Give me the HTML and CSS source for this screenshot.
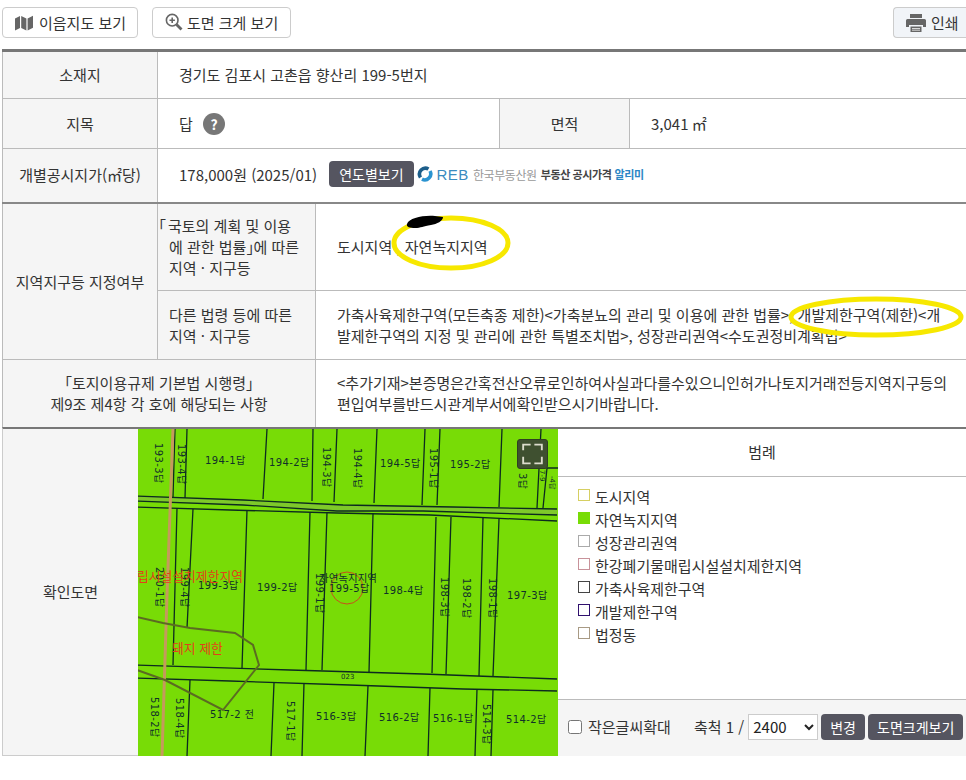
FILE: index.html
```html
<!DOCTYPE html>
<html lang="ko">
<head>
  <meta charset="UTF-8" />
  <meta name="viewport" content="width=device-width, initial-scale=1.0"/>
  <title>토지이용계획 확인</title>
  <link rel="stylesheet" href="styles.css">
</head>
<body>
<div class="page">

  <!-- 상단 버튼 -->
  <div class="toolbar">
    <div class="toolbar-left">
      <button class="tool-btn map-btn" type="button">
        <svg class="ico-map" viewBox="0 0 18 16"><path d="M0 3.500 5 1v12l-5 2.500zM6.200 1l5.200 2.400v12L6.200 13zM12.600 3.400 18 .8v12l-5.400 2.600z"/></svg>
        이음지도 보기
      </button>
      <button class="tool-btn zoom-btn" type="button">
        <svg class="ico-zoom" viewBox="0 0 18 18"><circle cx="7.200" cy="7.200" r="5.800"/><path d="M11.500 11.500 16.500 16.500" class="handle"/><path d="M7.200 4.500v5.400M4.500 7.200h5.400"/></svg>
        도면 크게 보기
      </button>
    </div>
    <button class="tool-btn print-btn" type="button">
      <svg class="ico-print" viewBox="0 0 20 18"><path d="M4 0h12v4H4zM1.500 5h17A1.500 1.500 0 0 1 20 6.500V13h-3v-2H3v2H0V6.500A1.500 1.500 0 0 1 1.500 5zM4.500 12.500h11V18h-11z"/><path class="paper" d="M6 14h8v.8H6zM6 15.800h8v.8H6z"/></svg>
      인쇄
    </button>
  </div>

  <!-- 기본 정보 -->
  <table class="info">
    <colgroup>
      <col class="c1"><col class="c2"><col class="c3"><col class="c4"><col class="c5">
    </colgroup>
    <tr class="r1">
      <th>소재지</th>
      <td colspan="4">경기도 김포시 고촌읍 향산리 199-5번지</td>
    </tr>
    <tr class="r2">
      <th>지목</th>
      <td colspan="2">답 <span class="help">?</span></td>
      <th>면적</th>
      <td>3,041 ㎡</td>
    </tr>
    <tr class="r3">
      <th>개별공시지가(㎡당)</th>
      <td colspan="4">
        <div class="price">
          <span>178,000원 (2025/01)</span>
          <button class="dark-btn year-btn" type="button">연도별보기</button>
          <span class="reb">
            <svg class="reb-mark" viewBox="0 0 16 16"><path class="arc-dark" d="M3.500 11.500A6 6 0 0 1 11.500 3"/><path class="arc-blue" d="M13 5A6 6 0 0 1 5 13.200"/></svg>
            <span class="reb-name">REB</span>
            <span class="reb-gray">한국부동산원</span>
            <b>부동산 공시가격</b>
            <b class="reb-blue">알리미</b>
          </span>
        </div>
      </td>
    </tr>
    <tr class="r4">
      <th rowspan="2">지역지구등 지정여부</th>
      <th class="sub"><span class="hang">「</span>국토의 계획 및 이용<br>에 관한 법률<span class="close">」</span>에 따른<br>지역 · 지구등</th>
      <td colspan="3" class="zone">도시지역 , 자연녹지지역</td>
    </tr>
    <tr class="r5">
      <th class="sub">다른 법령 등에 따른<br>지역 · 지구등</th>
      <td colspan="3" class="long">가축사육제한구역(모든축종 제한)&lt;가축분뇨의 관리 및 이용에 관한 법률&gt;, 개발제한구역(제한)&lt;개발제한구역의 지정 및 관리에 관한 특별조치법&gt;, 성장관리권역&lt;수도권정비계획법&gt;</td>
    </tr>
    <tr class="r6">
      <th colspan="2">「토지이용규제 기본법 시행령」<br>제9조 제4항 각 호에 해당되는 사항</th>
      <td colspan="3" class="long">&lt;추가기재&gt;본증명은간혹전산오류로인하여사실과다를수있으니인허가나토지거래전등지역지구등의편입여부를반드시관계부서에확인받으시기바랍니다.</td>
    </tr>
  </table>

  <!-- 확인도면 -->
  <div class="map-row">
    <div class="map-label">확인도면</div>
    <div class="map-box">
      <svg class="map" viewBox="138 429 420 327">
        <rect x="138" y="429" width="420" height="327" fill="#78dc06"/>
        <polygon class="road" points="137,496 243,500 343,505 453,507 557,509 557,515 423,511 337,512 243,505 137,501"/>

        <g class="parcel">
          <!-- 도로 -->
          <polyline points="137,496 243,500 343,505 453,507 557,509"/>
          <polyline points="137,501 243,505 337,511 423,511 557,515"/>
          <polyline points="137,507 230,510 337,513 430,515 557,521"/>
          <polyline points="137,665 290,670 423,674 557,679"/>
          <polyline points="137,678 230,681 350,685 463,689 557,691"/>
          <!-- 상단 필지 -->
          <path d="M175 429 173 497M187 429 185 498M267 429 263 499M313 429 312 501M337 429 334 502M377 429 374 503M425 429 422 505M440 429 437 505M502 429 499 507M541 429 537 508M547 468 543 508M547 468H558"/>
          <!-- 중간 필지 -->
          <path d="M177 508 173 665M193 509 187 628M247 510 242 668M310 512 306 670M327 512 322 670M373 514 369 672M436 517 432 673M451 517 446 674M483 518 479 676M499 519 493 676"/>
          <!-- 하단 필지 -->
          <path d="M190 680 187 756M274 683 271 756M304 683 302 756M368 686 365 756M430 688 428 756M477 689 475 756M493 690 491 756"/>
        </g>

        <polyline class="pink-line" points="173,429 167,595 162,756"/>
        <polyline class="olive-line" points="137,617 163,623 190,628 235,633 253,645 259,665 223,710 165,680 137,670"/>
        <circle class="red-circle" cx="347" cy="588" r="16"/>

        <g class="lbl">
          <text x="205" y="464">194-1답</text>
          <text x="269" y="466">194-2답</text>
          <text x="380" y="467">194-5답</text>
          <text x="450" y="468">195-2답</text>
          <text x="198" y="589">199-3답</text>
          <text x="257" y="591">199-2답</text>
          <text x="329" y="592">199-5답</text>
          <text x="383" y="594">198-4답</text>
          <text x="507" y="599">197-3답</text>
          <text x="210" y="718">517-2 전</text>
          <text x="316" y="720">516-3답</text>
          <text x="379" y="721">516-2답</text>
          <text x="433" y="722">516-1답</text>
          <text x="506" y="723">514-2답</text>

          <text transform="translate(155 443) rotate(90)">193-3답</text>
          <text transform="translate(178 444) rotate(90)">193-4답</text>
          <text transform="translate(323 447) rotate(90)">194-3답</text>
          <text transform="translate(354 448) rotate(90)">194-4답</text>
          <text transform="translate(430 448) rotate(90)">195-1답</text>
          <text transform="translate(519 473) rotate(90)">3답</text>
          <text transform="translate(156 567) rotate(90)">200-1답</text>
          <text transform="translate(181 567) rotate(90)">199-4답</text>
          <text transform="translate(316 573) rotate(90)">199-1답</text>
          <text transform="translate(441 577) rotate(90)">198-3답</text>
          <text transform="translate(463 578) rotate(90)">198-2답</text>
          <text transform="translate(489 578) rotate(90)">198-1답</text>
          <text transform="translate(151 697) rotate(90)">518-2답</text>
          <text transform="translate(176 698) rotate(90)">518-4답</text>
          <text transform="translate(287 701) rotate(90)">517-1답</text>
          <text transform="translate(483 704) rotate(90)">514-3답</text>
        </g>
        <text class="tiny" transform="translate(540 470) rotate(90)">7-9</text>
        <text class="tiny" transform="translate(550 476) rotate(90)">-4답</text>
        <text class="tiny" x="341" y="679">023</text>

        <text class="zone-mark" x="319" y="582">자연녹지지역</text>
        <text class="red-lbl" x="137" y="581">립시설설치제한지역</text>
        <text class="red-lbl" x="172" y="653">돼지 제한</text>
      </svg>
      <button class="full-btn" type="button">
        <svg viewBox="0 0 30 30"><path d="M5 11V5h8M17 5h8v6M25 18v7h-8M13 25H5v-7"/></svg>
      </button>
    </div>
    <div class="legend">
      <div class="legend-title">범례</div>
      <ul class="legend-list">
        <li><i class="sw sw-city"></i>도시지역</li>
        <li><i class="sw sw-green"></i>자연녹지지역</li>
        <li><i class="sw sw-growth"></i>성장관리권역</li>
        <li><i class="sw sw-han"></i>한강폐기물매립시설설치제한지역</li>
        <li><i class="sw sw-farm"></i>가축사육제한구역</li>
        <li><i class="sw sw-dev"></i>개발제한구역</li>
        <li><i class="sw sw-dong"></i>법정동</li>
      </ul>
      <div class="legend-foot">
        <label class="small-text"><input type="checkbox"> 작은글씨확대</label>
        <span class="scale">축척 1 /</span>
        <select class="scale-select">
          <option>2400</option>
        </select>
        <button class="dark-btn" type="button">변경</button>
        <button class="dark-btn" type="button">도면크게보기</button>
      </div>
    </div>
  </div>

  <!-- 손으로 그린 표시 -->
  <svg class="marks" viewBox="0 0 966 780">
    <ellipse class="mark-yellow" cx="451" cy="243" rx="57" ry="25"/>
    <ellipse class="mark-yellow" cx="876" cy="317" rx="85" ry="18"/>
    <path class="mark-black" d="M407 224c2-6 16-9 28-8l8 1c0 4-6 7-12 8-8 1-10 3-16 3-5 0-9-1-8-4z"/>
  </svg>

</div>
</body>
</html>
```

FILE: styles.css
```css
* {
  box-sizing: border-box;
}

html, body {
  margin: 0;
  padding: 0;
  background: #fff;
}

body {
  font-family: "Noto Sans CJK KR", "Noto Sans", sans-serif;
  font-size: 15px;
  color: #333;
  overflow: hidden;
}

.page {
  position: relative;
  width: 966px;
  height: 780px;
  padding: 7px 0 0 2px;
  overflow: hidden;
}

button, select, input {
  font-family: inherit;
}

/* === TOOLBAR === */
.toolbar {
  display: flex;
  justify-content: space-between;
  height: 31px;
  margin-bottom: 11px;
}

.toolbar-left {
  display: flex;
  gap: 14px;
}

.tool-btn {
  display: flex;
  align-items: center;
  height: 31px;
  padding: 0 12px;
  background: #fff;
  border: 1px solid #ccc;
  border-radius: 4px;
  font-size: 15px;
  white-space: nowrap;
  color: #333;
}

.map-btn {
  width: 136px;
  gap: 6px;
}

.zoom-btn {
  width: 139px;
  gap: 4px;
}

.print-btn {
  width: 73px;
  gap: 5px;
  padding: 0 0 0 12px;
  background: #f1f4f8;
  border-radius: 4px 0 0 4px;
  border-right: 0;
}

.ico-map {
  flex: none;
  width: 18px;
  height: 16px;
  fill: #666;
}

.ico-zoom {
  flex: none;
  width: 18px;
  height: 18px;
  margin-top: -2px;
  fill: none;
  stroke: #666;
  stroke-width: 1.600;
}

.ico-zoom .handle {
  stroke-width: 2.800;
}

.ico-print {
  flex: none;
  width: 20px;
  height: 18px;
  fill: #666;
}

.ico-print .paper {
  fill: #fff;
}

/* === TABLE === */
.info {
  width: 964px;
  table-layout: fixed;
  border-collapse: collapse;
  border-top: 3px solid #777;
  border-left: 1px solid #ccc;
}

.c1 { width: 155px; }
.c2 { width: 158px; }
.c3 { width: 184px; }
.c4 { width: 130px; }
.c5 { width: 337px; }

.info th, .info td {
  padding: 0;
  border: 1px solid #bbb;
  font-size: 15px;
  line-height: 21px;
}

.info tr > :last-child {
  border-right: 0;
}

.info th {
  background: #f5f5f5;
  font-weight: 400;
  text-align: center;
}

.info td {
  padding-left: 21px;
}

.info .sub {
  padding: 0 0 0 11px;
  text-align: left;
}

.hang {
  display: inline-block;
  width: 17px;
  margin-left: -18px;
}

.close {
  letter-spacing: -8px;
}

.r1 { height: 48px; }
.r2 { height: 50px; }
.r3 { height: 54px; }
.r4 { height: 88px; }
.r5 { height: 69px; }
.r6 { height: 67px; }

.info .r1 > th, .info .r1 > td,
.info .r3 > th, .info .r3 > td {
  padding-bottom: 2px;
}

.r3 > th, .r3 > td {
  border-bottom: 2px solid #888 !important;
}

.r6 > th, .r6 > td {
  border-bottom: 0 !important;
}

.help {
  display: inline-block;
  width: 22px;
  height: 22px;
  margin-left: 6px;
  border-radius: 50%;
  background: #777;
  color: #fff;
  font-weight: 700;
  font-size: 14px;
  line-height: 22px;
  text-align: center;
}

.price {
  display: flex;
  align-items: center;
  gap: 12px;
}

.dark-btn {
  flex: none;
  height: 26px;
  padding: 0 9px;
  background: #555560;
  border: 0;
  border-radius: 4px;
  color: #fff;
  font-size: 14px;
  white-space: nowrap;
}

.year-btn {
  padding: 0 10px;
}

.reb {
  display: flex;
  align-items: center;
  gap: 4px;
  margin-left: -9px;
  font-size: 11px;
  letter-spacing: -0.4px;
}

.reb-mark {
  width: 16px;
  height: 16px;
  fill: none;
  stroke-width: 3.600;
}

.arc-dark {
  stroke: #1c5e8a;
}

.arc-blue {
  stroke: #2a93d0;
}

.reb-name {
  font-family: "Liberation Sans", sans-serif;
  font-size: 15px;
  letter-spacing: 0.500px;
  color: #3a8bc0;
}

.reb-gray {
  font-size: 12px;
  color: #999;
}

.reb b {
  font-weight: 700;
  color: #444;
}

.reb .reb-blue {
  color: #2a86c5;
  margin-left: -1px;
}

.info .long {
  padding-right: 18px;
}

/* === MAP === */
.map-row {
  display: flex;
  width: 964px;
  height: 329px;
  border-top: 2px solid #777;
  border-bottom: 1px solid #ccc;
  border-left: 1px solid #ccc;
}

.map-label {
  flex: 0 0 135px;
  display: flex;
  align-items: center;
  justify-content: center;
  background: #f5f5f5;
}

.map-box {
  position: relative;
  flex: 0 0 420px;
  height: 327px;
}

.map {
  display: block;
  width: 420px;
  height: 327px;
}

.road {
  fill: #7ec92a;
}

.parcel {
  fill: none;
  stroke: #0c2a20;
  stroke-width: 1.300;
}

.pink-line {
  fill: none;
  stroke: #c59a5c;
  stroke-width: 3;
}

.olive-line {
  fill: none;
  stroke: #5b6b22;
  stroke-width: 2;
}

.red-circle {
  fill: none;
  stroke: #c8501c;
  stroke-width: 1;
}

.lbl {
  font-family: "DejaVu Sans", "Noto Sans CJK KR", sans-serif;
  font-size: 10px;
  letter-spacing: 0.400px;
  fill: #10302a;
}

.tiny {
  font-family: "DejaVu Sans", "Noto Sans CJK KR", sans-serif;
  font-size: 7px;
  fill: #10302a;
}

.zone-mark {
  font-size: 10.500px;
  fill: #10302a;
}

.red-lbl {
  font-size: 12.800px;
  fill: #e2401a;
}

.full-btn {
  position: absolute;
  top: 10px;
  left: 379px;
  width: 31px;
  height: 30px;
  padding: 0;
  background: #3f5030;
  border: 1px solid #2f3f22;
  border-radius: 3px;
}

.full-btn svg {
  display: block;
  width: 100%;
  height: 100%;
  fill: none;
  stroke: #dcdccc;
  stroke-width: 2;
}

/* === LEGEND === */
.legend {
  flex: 1;
  display: flex;
  flex-direction: column;
  height: 327px;
}

.legend-title {
  height: 48px;
  border-bottom: 1px solid #bbb;
  line-height: 46px;
  text-align: center;
}

.legend-list {
  flex: 1;
  margin: 0;
  padding: 8px 0 0 20px;
  list-style: none;
}

.legend-list li {
  display: flex;
  align-items: center;
  gap: 5px;
  height: 23px;
}

.sw {
  width: 12px;
  height: 12px;
  margin-top: -2px;
  border: 1px solid #999;
}

.sw-city { border-color: #d6cf62; }
.sw-green { border-color: #78dc06; background: #78dc06; }
.sw-growth { border-color: #aaa; }
.sw-han { border-color: #c8929a; }
.sw-farm { border-color: #444; }
.sw-dev { border-color: #30106e; }
.sw-dong { border-color: #a89a84; }

.legend-foot {
  display: flex;
  align-items: center;
  gap: 3px;
  height: 57px;
  padding: 0 0 2px 10px;
  background: #f5f5f5;
  border-top: 1px solid #bbb;
}

.small-text {
  display: flex;
  align-items: center;
  gap: 6px;
  width: 123px;
  white-space: nowrap;
}

.small-text input {
  flex: none;
  width: 14px;
  height: 14px;
  margin: 0;
}

.scale {
  white-space: nowrap;
  margin-right: 1px;
}

.scale-select {
  flex: none;
  width: 70px;
  height: 26px;
  padding-left: 0;
  background: #fff;
  border: 1px solid #ccc;
  font-size: 15px;
  color: #222;
}

/* === ANNOTATION === */
.marks {
  position: absolute;
  top: 0;
  left: 0;
  width: 966px;
  height: 780px;
  pointer-events: none;
}

.mark-yellow {
  fill: none;
  stroke: #f7e800;
  stroke-width: 5;
}

.mark-black {
  fill: #000;
}
```
